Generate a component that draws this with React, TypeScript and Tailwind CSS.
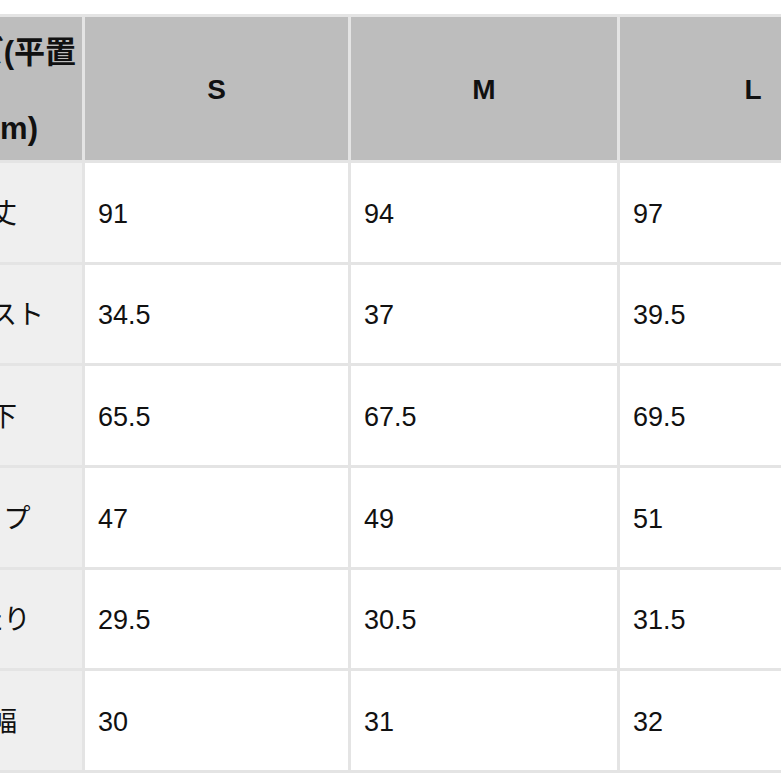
import React from "react";

const rows: [string, string, string, string][] = [
  ["着丈", "91", "94", "97"],
  ["ウエスト", "34.5", "37", "39.5"],
  ["股下", "65.5", "67.5", "69.5"],
  ["ヒップ", "47", "49", "51"],
  ["わたり", "29.5", "30.5", "31.5"],
  ["裾幅", "30", "31", "32"],
];

const font = {
  fontFamily: '"Liberation Sans", Arial, "Noto Sans CJK JP", sans-serif',
};

export default function App() {
  return (
    <div
      className="w-[781px] h-[781px] overflow-hidden bg-white pt-[14px] text-[#111]"
      style={font}
    >
      <div className="ml-[-105px] w-max grid grid-cols-[184px_263px_266px_266px] gap-[3px] p-[3px] bg-[#e4e4e4]">
        <div className="h-[143px] bg-[#bdbdbd] flex flex-col items-end justify-center gap-[42px] pt-[4px] pr-[6px] font-bold text-[31px]">
          <div className="leading-[34px] whitespace-nowrap">サイズ(平置</div>
          <div className="leading-[34px] whitespace-nowrap mr-[38px]">き(cm)</div>
        </div>
        {["S", "M", "L"].map((s) => (
          <div
            key={s}
            className="h-[143px] bg-[#bdbdbd] flex items-center justify-center pt-[2px] font-bold text-[28px]"
          >
            {s}
          </div>
        ))}
        {rows.map((r) => (
          <React.Fragment key={r[0]}>
            <div className="h-[98.7px] bg-[#efefef] flex items-center justify-center pt-[3px] text-[27px] whitespace-nowrap">
              {r[0]}
            </div>
            {r.slice(1).map((v, i) => (
              <div
                key={i}
                className="h-[98.7px] bg-white flex items-center pl-[13px] pt-[3px] text-[27px]"
              >
                {v}
              </div>
            ))}
          </React.Fragment>
        ))}
      </div>
    </div>
  );
}
